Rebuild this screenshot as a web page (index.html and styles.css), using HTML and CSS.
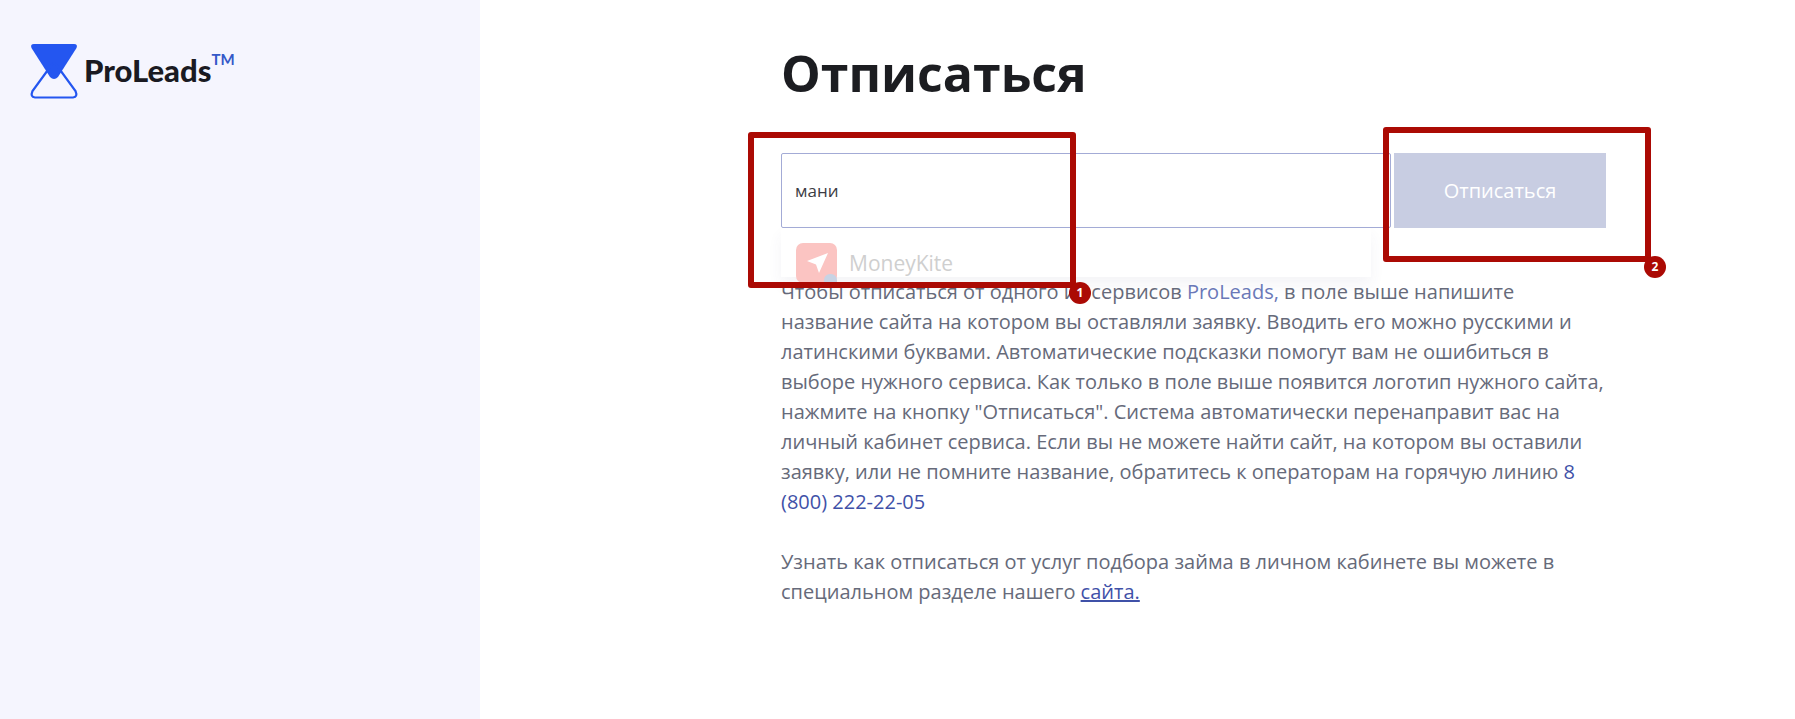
FILE: index.html
```html
<!DOCTYPE html>
<html lang="ru">
<head>
  <meta charset="UTF-8">
  <meta name="viewport" content="width=device-width, initial-scale=1.0">
  <title>Отписаться</title>
  <link rel="stylesheet" href="styles.css">
</head>
<body>

  <div class="sidebar">
    <div class="logo">
      <svg class="logo-icon" viewBox="0 0 48 56" width="48" height="56">
        <path d="M4 1H44Q48 1 46.500 5L28 34Q24 38 20 34L1.500 5Q0 1 4 1Z" fill="#2456f0"/>
        <path d="M21.500 22Q24 19 26.500 22L45.500 48Q48 54 43 54.500H5Q0 54 2.500 48Z" fill="none" stroke="#2456f0" stroke-width="2.200"/>
      </svg>
      <span class="logo-text">ProLeads</span><span class="logo-tm">TM</span>
    </div>
  </div>

  <div class="content">
    <h1 class="title">Отписаться</h1>

    <div class="search-row">
      <div class="search-input">мани</div>
      <button class="search-button">Отписаться</button>
    </div>

    <div class="suggest">
      <div class="suggest-item">
        <span class="suggest-icon">
          <svg viewBox="0 0 24 24" width="24" height="24"><path d="M23 2L2 10L11 13.500L14 22Z" fill="#fff"/></svg>
          <span class="suggest-badge"></span>
        </span>
        <span class="suggest-name">MoneyKite</span>
      </div>
    </div>

    <p class="text">Чтобы отписаться от одного из сервисов <a class="link brand" href="#">ProLeads,</a> в поле выше напишите название сайта на котором вы оставляли заявку. Вводить его можно русскими и латинскими буквами. Автоматические подсказки помогут вам не ошибиться в выборе нужного сервиса. Как только в поле выше появится логотип нужного сайта, нажмите на кнопку "Отписаться". Система автоматически перенаправит вас на личный кабинет сервиса. Если вы не можете найти сайт, на котором вы оставили заявку, или не помните название, обратитесь к операторам на горячую линию <a class="link" href="#">8 (800) 222-22-05</a></p>

    <p class="text">Узнать как отписаться от услуг подбора займа в личном кабинете вы можете в специальном разделе нашего <a class="link underlined" href="#">сайта.</a></p>
  </div>

  <!-- red annotation frames on top of the page -->
  <div class="mark mark-one"><span class="mark-num">1</span></div>
  <div class="mark mark-two"><span class="mark-num">2</span></div>

</body>
</html>
```

FILE: styles.css
```css
body {
  font-family: "Open Sans", Arial, sans-serif;
  background-color: #ffffff;
  display: flex;
  height: 719px;
  margin: 0;
  padding: 0;
  overflow: hidden;
}

.sidebar {
  width: 480px;
  flex-shrink: 0;
  background-color: #f5f5fe;
  padding: 43px 0 0 30px;
  box-sizing: border-box;
}

.logo {
  display: flex;
  align-items: flex-start;
}

.logo-icon {
  margin-right: 6px;
}

.logo-text {
  font-family: Lato, sans-serif;
  font-weight: 900;
  font-size: 31px;
  line-height: 38px;
  margin-top: 8px;
  color: #1a1a22;
}

.logo-tm {
  font-family: Lato, sans-serif;
  font-weight: 700;
  font-size: 15px;
  line-height: 18px;
  margin-top: 7px;
  color: #3458c8;
}

.content {
  padding: 38px 0 0 301px;
  width: 830px;
}

.title {
  font-size: 50px;
  line-height: 70px;
  font-weight: 700;
  color: #1c1d21;
  margin: 0 0 45px 0;
}

.search-row {
  display: flex;
  height: 75px;
}

.search-input {
  width: 610px;
  border: 1px solid #a3abd6;
  border-radius: 2px;
  padding: 0 13px;
  box-sizing: border-box;
  font-size: 17px;
  line-height: 73px;
  color: #3c3c44;
}

.search-button {
  width: 212px;
  margin-left: 3px;
  border: none;
  background-color: #c8cde2;
  color: #ffffff;
  font-family: inherit;
  font-size: 20px;
}

.suggest {
  width: 590px;
  height: 49px;
  padding: 15px 0 0 15px;
  box-sizing: border-box;
  box-shadow: 0 8px 14px rgba(60, 70, 120, 0.06);
}

.suggest-item {
  display: flex;
  align-items: center;
}

.suggest-icon {
  position: relative;
  display: flex;
  align-items: center;
  justify-content: center;
  width: 41px;
  height: 40px;
  background-color: #fbc4c2;
  border-radius: 7px;
}

.suggest-badge {
  position: absolute;
  right: 0;
  bottom: 0;
  width: 13px;
  height: 9px;
  border-radius: 6px 6px 0 0;
  background-color: #c8d3e4;
}

.suggest-name {
  font-size: 21px;
  color: #cfcfcf;
  margin-left: 12px;
}

.text {
  font-size: 20px;
  line-height: 30px;
  color: #666a7a;
  margin: 0 0 30px 0;
  width: 830px;
}

.link {
  color: #3f51a8;
  text-decoration: none;
}

.brand {
  color: #6a78b8;
}

.underlined {
  text-decoration: underline;
}

.mark {
  position: absolute;
  border: 6px solid #ab0a04;
  border-radius: 3px;
  box-sizing: border-box;
}

.mark-one {
  left: 748px;
  top: 132px;
  width: 328px;
  height: 156px;
}

.mark-two {
  left: 1383px;
  top: 127px;
  width: 268px;
  height: 135px;
}

.mark-num {
  position: absolute;
  right: -21px;
  bottom: -22px;
  width: 22px;
  height: 22px;
  border-radius: 50%;
  background-color: #ab0a04;
  color: #ffffff;
  font-size: 12px;
  font-weight: 700;
  line-height: 22px;
  text-align: center;
}
```
